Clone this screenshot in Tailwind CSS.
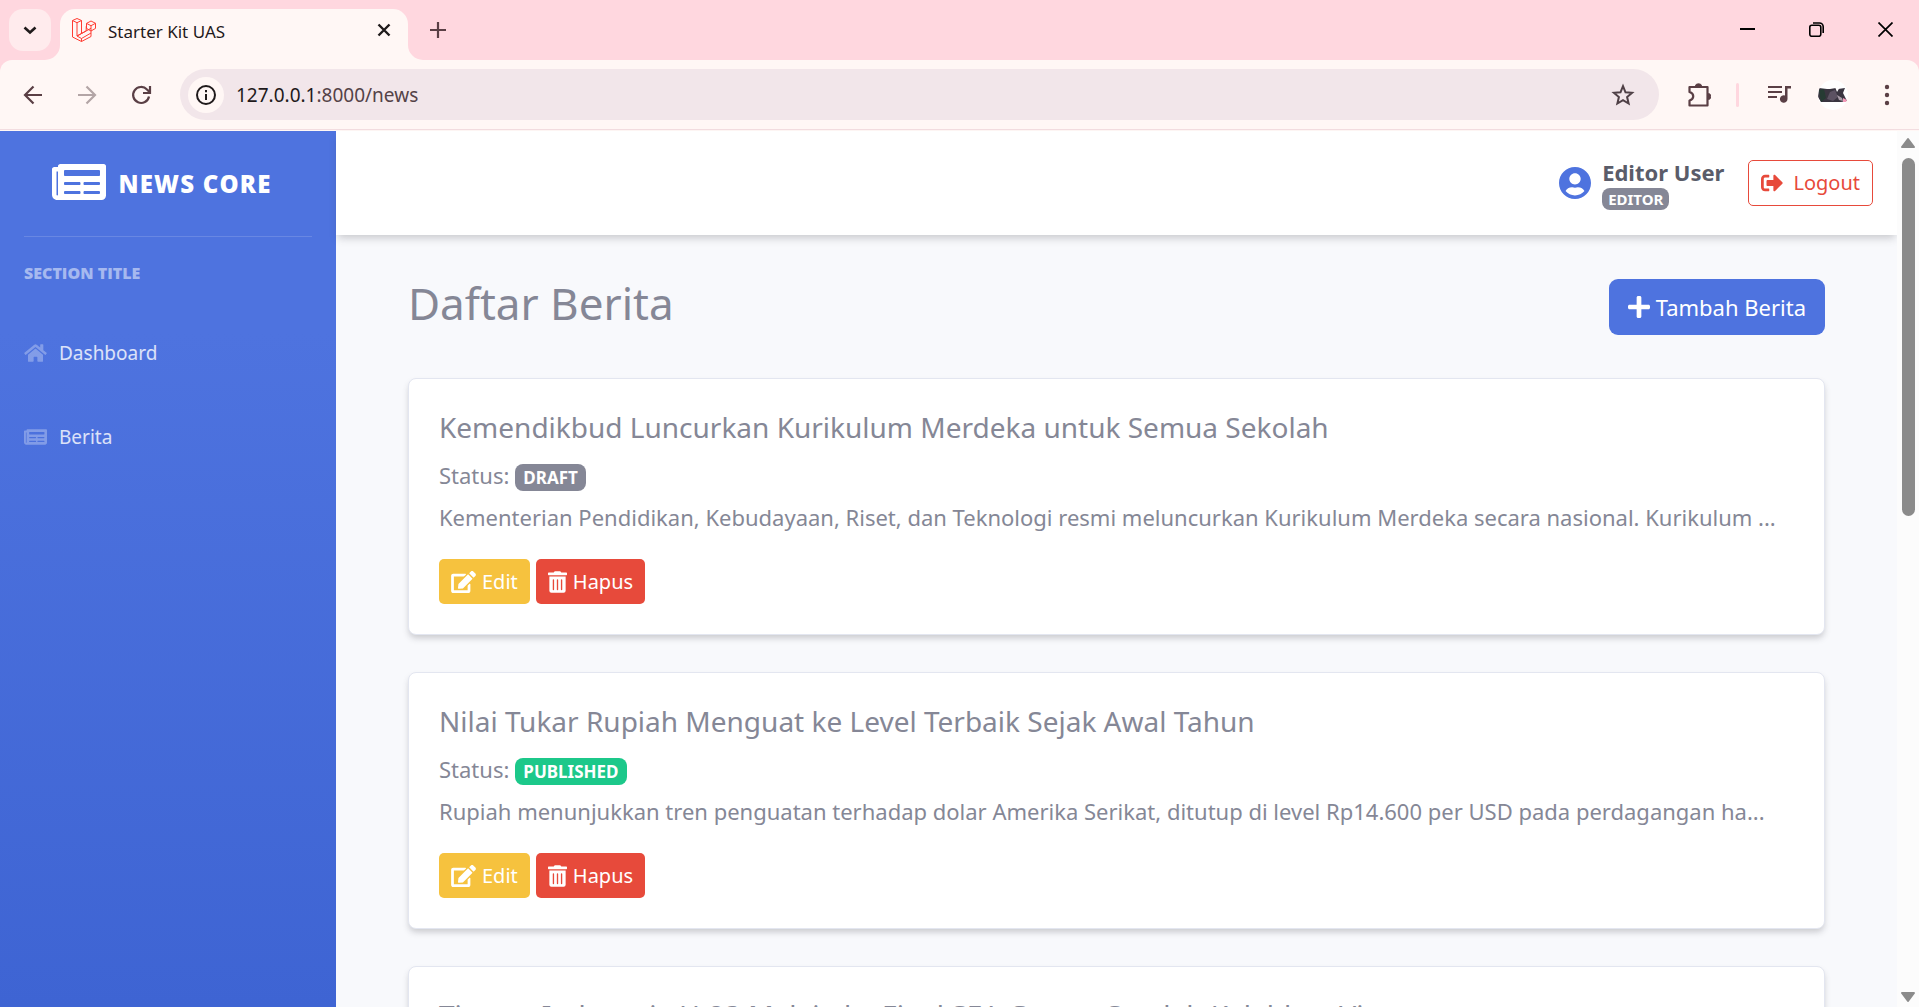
<!DOCTYPE html>
<html lang="id">
<head>
<meta charset="utf-8">
<meta name="viewport" content="width=device-width, initial-scale=1">
<title>Starter Kit UAS</title>
<script src="https://cdn.jsdelivr.net/npm/@tailwindcss/browser@4"></script>
</head>
<body class="flex h-screen flex-col overflow-hidden bg-[#ffd7df] font-['Noto_Sans','Open_Sans',sans-serif]">

<!-- Shared icon shapes -->
<svg class="hidden" aria-hidden="true">
  <symbol id="i-news" viewBox="0 64 576 384"><path d="M552 64H88c-13.255 0-24 10.745-24 24v8H24c-13.255 0-24 10.745-24 24v272c0 30.928 25.072 56 56 56h472c26.51 0 48-21.49 48-48V88c0-13.255-10.745-24-24-24zM56 400a8 8 0 0 1-8-8V144h16v248a8 8 0 0 1-8 8zm236-16H140c-6.627 0-12-5.373-12-12v-8c0-6.627 5.373-12 12-12h152c6.627 0 12 5.373 12 12v8c0 6.627-5.373 12-12 12zm208 0H348c-6.627 0-12-5.373-12-12v-8c0-6.627 5.373-12 12-12h152c6.627 0 12 5.373 12 12v8c0 6.627-5.373 12-12 12zm-208-96H140c-6.627 0-12-5.373-12-12v-8c0-6.627 5.373-12 12-12h152c6.627 0 12 5.373 12 12v8c0 6.627-5.373 12-12 12zm208 0H348c-6.627 0-12-5.373-12-12v-8c0-6.627 5.373-12 12-12h152c6.627 0 12 5.373 12 12v8c0 6.627-5.373 12-12 12zm0-96H140c-6.627 0-12-5.373-12-12v-40c0-6.627 5.373-12 12-12h360c6.627 0 12 5.373 12 12v40c0 6.627-5.373 12-12 12z"/></symbol>
  <symbol id="i-edit" viewBox="0 0 576 512"><path d="M402.6 83.2l90.2 90.2c3.8 3.8 3.8 10 0 13.8L274.4 405.6l-92.8 10.3c-12.4 1.4-22.9-9.1-21.5-21.5l10.3-92.8L388.8 83.2c3.8-3.8 10-3.8 13.8 0zm162-22.9l-48.8-48.8c-15.2-15.2-39.9-15.2-55.2 0l-35.4 35.4c-3.8 3.8-3.8 10 0 13.8l90.2 90.2c3.8 3.8 10 3.8 13.8 0l35.4-35.4c15.2-15.3 15.2-40 0-55.2zM384 346.2V448H64V128h229.8c3.2 0 6.2-1.3 8.5-3.5l40-40c7.6-7.6 2.2-20.5-8.5-20.5H48C21.5 64 0 85.5 0 112v352c0 26.5 21.5 48 48 48h352c26.5 0 48-21.5 48-48V306.2c0-10.7-12.9-16-20.5-8.5l-40 40c-2.2 2.3-3.5 5.300-3.500 8.500z"/></symbol>
  <symbol id="i-trash" viewBox="0 0 448 512"><path d="M32 464a48 48 0 0 0 48 48h288a48 48 0 0 0 48-48V128H32zm272-256a16 16 0 0 1 32 0v224a16 16 0 0 1-32 0zm-96 0a16 16 0 0 1 32 0v224a16 16 0 0 1-32 0zm-96 0a16 16 0 0 1 32 0v224a16 16 0 0 1-32 0zM432 32H312l-9.400-18.700A24 24 0 0 0 281.100 0H166.800a23.720 23.720 0 0 0-21.400 13.300L136 32H16A16 16 0 0 0 0 48v32a16 16 0 0 0 16 16h416a16 16 0 0 0 16-16V48a16 16 0 0 0-16-16z"/></symbol>
</svg>

<!-- Tab strip -->
<header class="flex h-[60px] shrink-0 items-start">
  <button aria-label="Cari tab" class="mt-[9px] ml-[9px] grid size-[42px] place-items-center rounded-[14px] bg-[#ffebed]">
    <svg class="size-6" viewBox="0 0 24 24" fill="none" stroke="#1f1a1b" stroke-width="2.600"><path d="M6.500 9.500 12 14.500 17.500 9.500"/></svg>
  </button>
  <div class="relative mt-[9px] ml-[9px] flex h-[51px] w-[348px] items-start rounded-t-[15px] bg-[#fff7f5] pt-[9px] pr-3 pl-3">
    <svg class="absolute bottom-0 -left-[15px] size-[15px]" viewBox="0 0 15 15" fill="#fff7f5"><path d="M15 0v15H0A15 15 0 0 0 15 0z"/></svg>
    <svg class="absolute -right-[15px] bottom-0 size-[15px]" viewBox="0 0 15 15" fill="#fff7f5"><path d="M0 0v15h15A15 15 0 0 1 0 0z"/></svg>
    <svg class="size-6" viewBox="0 0 24 24" fill="none" stroke="#ff3d33" stroke-width="1" stroke-linejoin="round"><path d="M.5 2.500 5 .5l4.500 2v13l4.700-2.600V8.300M.5 2.500v16.500l9 4.500 9.500-5v-5.500l4.500-2.600V5.300L19 3l-4.500 2.400v5l4.500 2.600M.5 2.500 5 4.700l4.500-2.200M5 4.700V18l4.500 2.500v3M5 18l4.500-2.500M9.500 20.500 19 15M5 18l14-7.700M14.500 5.400 19 7.700l4.500-2.400M19 7.700V13"/></svg>
    <span class="ml-3 text-[17px] leading-7 text-[#1f1a1b]">Starter Kit UAS</span>
    <button aria-label="Tutup tab" class="ml-auto grid size-6 place-items-center">
      <svg class="size-[14px]" viewBox="0 0 14 14" stroke="#1f1a1b" stroke-width="2.400"><path d="M1.500 1.500l11 11M12.500 1.500l-11 11"/></svg>
    </button>
  </div>
  <button aria-label="Tab baru" class="mt-[18px] ml-[18px] grid size-6 place-items-center">
    <svg class="size-4" viewBox="0 0 16 16" stroke="#5a3f45" stroke-width="2.200"><path d="M8 0v16M0 8h16"/></svg>
  </button>
  <div class="mt-[17px] mr-[22px] ml-auto flex items-center gap-[45px]">
    <button aria-label="Kecilkan" class="grid size-6 place-items-center"><svg class="size-[15px]" viewBox="0 0 15 15" stroke="#000" stroke-width="2"><path d="M0 7h15"/></svg></button>
    <button aria-label="Pulihkan" class="grid size-6 place-items-center"><svg class="size-[15px]" viewBox="0 0 15 15" fill="none" stroke="#000" stroke-width="1.600"><rect x=".8" y="3.300" width="11" height="11" rx="2"/><path d="M4 1h6.500A3.700 3.700 0 0 1 14.200 4.700V11"/></svg></button>
    <button aria-label="Tutup" class="grid size-6 place-items-center"><svg class="size-[15px]" viewBox="0 0 15 15" stroke="#000" stroke-width="1.700"><path d="M.5 .5l14 14M14.500 .5l-14 14"/></svg></button>
  </div>
</header>

<!-- Toolbar -->
<div class="flex h-[70px] shrink-0 items-center rounded-t-xl border-b border-[#f3dde0] bg-[#fff7f5] pr-5 pl-[21px] text-[#5a3f45]">
  <div class="flex items-center gap-[30px]">
    <button aria-label="Kembali"><svg class="size-6" viewBox="0 0 24 24" fill="none" stroke="currentColor" stroke-width="2.200"><path d="M21 12H4.500M12.500 3.500 4 12l8.500 8.500"/></svg></button>
    <button aria-label="Maju" class="text-[#b3a5a6]"><svg class="size-6" viewBox="0 0 24 24" fill="none" stroke="currentColor" stroke-width="2.200"><path d="M3 12h16.500M11.500 3.500 20 12l-8.500 8.500"/></svg></button>
    <button aria-label="Muat ulang"><svg class="size-6" viewBox="0 0 24 24" fill="none" stroke="currentColor" stroke-width="2.200"><path d="M20 13.500A8 8 0 1 1 18 6.500L20.500 9M21 3v7h-7"/></svg></button>
  </div>
  <div class="ml-[27px] flex h-[51px] flex-1 items-center rounded-full bg-[#f2e6ea] pr-6 pl-2">
    <button aria-label="Info situs" class="grid size-9 shrink-0 place-items-center rounded-full bg-[#fff7f5]">
      <svg class="size-5" viewBox="0 0 20 20" fill="none" stroke="#1f1a1b" stroke-width="2"><circle cx="10" cy="10" r="9"/><path d="M10 9v6M10 5v2.200"/></svg>
    </button>
    <div class="ml-3 flex-1 text-[19px] leading-7 text-[#544247]"><span class="text-[#1f1a1b]">127.0.0.1</span>:8000/news</div>
    <button aria-label="Simpan bookmark"><svg class="size-6" viewBox="0 0 24 24" fill="none" stroke="#4f4046" stroke-width="2"><path d="M12 3.200l2.500 6.100 6.600.5-5 4.300 1.500 6.400L12 17.100l-5.600 3.400 1.500-6.400-5-4.300 6.600-.5z"/></svg></button>
  </div>
  <div class="ml-7 flex items-center">
    <button aria-label="Ekstensi"><svg class="size-6" viewBox="0 0 24 24" fill="none" stroke="currentColor" stroke-width="2.200" stroke-linejoin="round"><path d="M2.500 4H20.500V22.500H2.500V17.500C7.500 16 7.500 10.500 2.500 9z"/><path d="M8.500 3a3 2.200 0 0 1 6 0zM21.500 10.500a2.200 3 0 0 1 0 6z" fill="currentColor" stroke-width="1"/></svg></button>
    <span class="ml-[25px] h-6 w-[3px] rounded-full bg-[#ffd7df]"></span>
    <button aria-label="Kontrol media" class="ml-7"><svg class="size-6" viewBox="0 0 24 24" fill="currentColor"><path d="M1 3h14v2H1zM1 8h14v2H1zM1 13h9v2H1z"/><path d="M18 3h6v2.500h-3.500V16a3.800 3.800 0 1 1-2.500-3.500z"/></svg></button>
    <button aria-label="Profil" class="ml-[27px] grid size-[30px] place-items-center overflow-hidden rounded-full bg-white">
      <svg class="size-[30px]" viewBox="0 0 30 30"><path d="M1 8l8 1 3 0 6-1 2 1 7-1-2 5 2 4 2 4-6 1-6 0H3l-3-5z" fill="#3a3540"/><path d="M1 10l5-1 2 9-5 4z" fill="#263b33"/><path d="M12 12l5-2 3 7-5 4-6-2z" fill="#5c5262"/><path d="M17 7h5l-3 5z" fill="#fff"/><path d="M19 15l5 3 1 3-4-1z" fill="#a99da8"/><path d="M25 18l4 2-1 2h-3z" fill="#f49ab8"/></svg>
    </button>
    <button aria-label="Menu" class="ml-[27px]"><svg class="size-6" viewBox="0 0 24 24" fill="currentColor"><circle cx="12" cy="4" r="2.200"/><circle cx="12" cy="12" r="2.200"/><circle cx="12" cy="20" r="2.200"/></svg></button>
  </div>
</div>

<!-- Page viewport -->
<div class="flex min-h-0 flex-1 border-t border-[#fff7f5] bg-[#f8f9fc]">
  <nav class="flex w-[336px] shrink-0 flex-col bg-[linear-gradient(180deg,#4e73df_23%,#3e64d3_100%)] px-6 text-white">
    <a href="#" class="flex h-[106px] items-center justify-center gap-3 border-b border-white/15 pr-3">
      <svg class="mb-1 h-9 w-[54px]" fill="currentColor"><use href="#i-news"/></svg>
      <span class="font-['Open_Sans',sans-serif] text-[24px] leading-8 font-extrabold tracking-wider uppercase">News Core</span>
    </a>
    <h2 class="mt-6 font-['Open_Sans',sans-serif] text-[16px] leading-6 font-extrabold text-white/50 uppercase">Section Title</h2>
    <ul class="mt-[26px] text-[19px] text-white/80">
      <li><a href="#" class="flex h-[84px] items-center gap-3">
        <svg class="h-5 w-[23px] fill-white/30" viewBox="0 0 576 512"><path d="M280.370 148.260L96 300.110V464a16 16 0 0 0 16 16l112.060-.29a16 16 0 0 0 15.920-16V368a16 16 0 0 1 16-16h64a16 16 0 0 1 16 16v95.640a16 16 0 0 0 16 16.050L464 480a16 16 0 0 0 16-16V300L295.670 148.260a12.190 12.190 0 0 0-15.300 0zM571.600 251.470L488 182.560V44.050a12 12 0 0 0-12-12h-56a12 12 0 0 0-12 12v72.610L318.470 43a48 48 0 0 0-61 0L4.340 251.470a12 12 0 0 0-1.600 16.900l25.500 31A12 12 0 0 0 45.150 301l235.220-193.740a12.190 12.190 0 0 1 15.300 0L530.900 301a12 12 0 0 0 16.900-1.600l25.500-31a12 12 0 0 0-1.700-16.930z"/></svg>
        Dashboard</a></li>
      <li><a href="#" class="flex h-[84px] items-center gap-3">
        <svg class="h-4 w-[23px] fill-white/30"><use href="#i-news"/></svg>
        Berita</a></li>
    </ul>
  </nav>

  <div class="flex min-w-0 flex-1 flex-col">
    <div class="flex h-[104px] shrink-0 items-center justify-end bg-white pr-6 shadow-[0_5px_8px_-2px_rgba(58,59,69,0.25)]">
      <svg class="size-8 fill-[#4e73df]" viewBox="0 8 496 496"><path d="M248 8C111 8 0 119 0 256s111 248 248 248 248-111 248-248S385 8 248 8zm0 96c48.600 0 88 39.400 88 88s-39.400 88-88 88-88-39.400-88-88 39.400-88 88-88zm0 344c-58.700 0-111.300-26.600-146.500-68.200 18.800-35.400 55.600-59.800 98.500-59.800 2.400 0 4.800.4 7.100 1.100 13 4.200 26.600 6.900 40.900 6.900 14.300 0 28-2.700 40.900-6.900 2.300-.7 4.700-1.100 7.100-1.100 42.900 0 79.700 24.400 98.500 59.800C359.300 421.400 306.700 448 248 448z"/></svg>
      <div class="ml-[11px] flex flex-col items-start">
        <span class="text-[22px] leading-8 font-bold text-[#5a5c69]">Editor User</span>
        <span class="rounded-lg bg-[#858796] px-1.5 text-[15px] leading-[22px] font-bold text-white">EDITOR</span>
      </div>
      <button class="ml-6 flex h-[46px] items-center gap-2.5 rounded-[5px] border border-[#e74a3b] px-3 text-[20px] text-[#e74a3b]">
        <svg class="size-[22px]" viewBox="0 0 512 512" fill="currentColor"><path d="M497 273L329 441c-15 15-41 4.500-41-17v-96H152c-13.300 0-24-10.700-24-24v-96c0-13.300 10.700-24 24-24h136V88c0-21.400 25.900-32 41-17l168 168c9.300 9.400 9.300 24.600 0 34zM192 436v-40c0-6.600-5.400-12-12-12H96c-17.700 0-32-14.300-32-32V160c0-17.700 14.300-32 32-32h84c6.600 0 12-5.400 12-12V76c0-6.600-5.400-12-12-12H96c-53 0-96 43-96 96v192c0 53 43 96 96 96h84c6.600 0 12-5.400 12-12z"/></svg>
        Logout</button>
    </div>

    <main class="min-h-0 flex-1 overflow-hidden px-[72px] pt-11 text-[#858796]">
      <div class="mb-[43px] flex h-14 items-start justify-between">
        <h1 class="text-[44px] leading-[48px]">Daftar Berita</h1>
        <a href="#" class="flex h-14 items-center gap-1.5 rounded-[9px] bg-[#4e73df] px-[19px] text-[22px] text-white">
          <svg class="size-[22px]" viewBox="0 32 448 448" fill="currentColor"><path d="M416 208H272V64c0-17.670-14.330-32-32-32h-32c-17.670 0-32 14.330-32 32v144H32c-17.670 0-32 14.330-32 32v32c0 17.670 14.330 32 32 32h144v144c0 17.670 14.330 32 32 32h32c17.670 0 32-14.330 32-32V304h144c17.670 0 32-14.330 32-32v-32c0-17.670-14.330-32-32-32z"/></svg>
          Tambah Berita</a>
      </div>

      <article class="mb-[37px] rounded-lg border border-[#e3e6f0] bg-white p-[30px] shadow-[0_4px_6px_-1px_rgba(58,59,69,0.25)]">
        <h2 class="mb-3 text-[28px] leading-9 whitespace-nowrap">Kemendikbud Luncurkan Kurikulum Merdeka untuk Semua Sekolah</h2>
        <p class="mb-1.5 flex h-9 items-center gap-1.5 text-[22px] leading-9">Status: <span class="mt-1 rounded-lg bg-[#858796] px-2 text-[17px] leading-[27px] font-bold text-white">DRAFT</span></p>
        <p class="mb-6 text-[22px] leading-9 whitespace-nowrap">Kementerian Pendidikan, Kebudayaan, Riset, dan Teknologi resmi meluncurkan Kurikulum Merdeka secara nasional. Kurikulum ...</p>
        <div class="flex gap-1.5 text-[20px] text-white">
          <button class="flex h-[45px] items-center gap-1.5 rounded-[5px] bg-[#f6c23e] px-3"><svg class="h-[22px] w-[25px]" fill="currentColor"><use href="#i-edit"/></svg>Edit</button>
          <button class="flex h-[45px] items-center gap-1.5 rounded-[5px] bg-[#e74a3b] px-3"><svg class="h-[22px] w-[19px]" fill="currentColor"><use href="#i-trash"/></svg>Hapus</button>
        </div>
      </article>

      <article class="mb-[37px] rounded-lg border border-[#e3e6f0] bg-white p-[30px] shadow-[0_4px_6px_-1px_rgba(58,59,69,0.25)]">
        <h2 class="mb-3 text-[28px] leading-9 whitespace-nowrap">Nilai Tukar Rupiah Menguat ke Level Terbaik Sejak Awal Tahun</h2>
        <p class="mb-1.5 flex h-9 items-center gap-1.5 text-[22px] leading-9">Status: <span class="mt-1 rounded-lg bg-[#1cc88a] px-2 text-[17px] leading-[27px] font-bold text-white">PUBLISHED</span></p>
        <p class="mb-6 text-[22px] leading-9 whitespace-nowrap">Rupiah menunjukkan tren penguatan terhadap dolar Amerika Serikat, ditutup di level Rp14.600 per USD pada perdagangan ha...</p>
        <div class="flex gap-1.5 text-[20px] text-white">
          <button class="flex h-[45px] items-center gap-1.5 rounded-[5px] bg-[#f6c23e] px-3"><svg class="h-[22px] w-[25px]" fill="currentColor"><use href="#i-edit"/></svg>Edit</button>
          <button class="flex h-[45px] items-center gap-1.5 rounded-[5px] bg-[#e74a3b] px-3"><svg class="h-[22px] w-[19px]" fill="currentColor"><use href="#i-trash"/></svg>Hapus</button>
        </div>
      </article>

      <article class="rounded-lg border border-[#e3e6f0] bg-white p-[30px] shadow-[0_4px_6px_-1px_rgba(58,59,69,0.25)]">
        <h2 class="mb-3 text-[28px] leading-9 whitespace-nowrap">Timnas Indonesia U-23 Melaju ke Final SEA Games Setelah Kalahkan Vietnam</h2>
      </article>
    </main>
  </div>

  <!-- Scrollbar -->
  <div class="flex w-[22px] shrink-0 flex-col items-center bg-[#fcfcfc] py-1" aria-hidden="true">
    <svg class="mt-0.5 h-3 w-4" viewBox="0 0 16 12" fill="#8b8b8b" stroke="#8b8b8b" stroke-width="2" stroke-linejoin="round"><path d="M8 2l6 8H2z"/></svg>
    <div class="mt-[9px] flex-1 self-stretch px-[5px]"><div class="h-[43%] w-[13px] rounded-full bg-[#8b8b8b]"></div></div>
    <svg class="h-3 w-4" viewBox="0 0 16 12" fill="#8b8b8b" stroke="#8b8b8b" stroke-width="2" stroke-linejoin="round"><path d="M8 10l6-8H2z"/></svg>
  </div>
</div>
</body>
</html>
